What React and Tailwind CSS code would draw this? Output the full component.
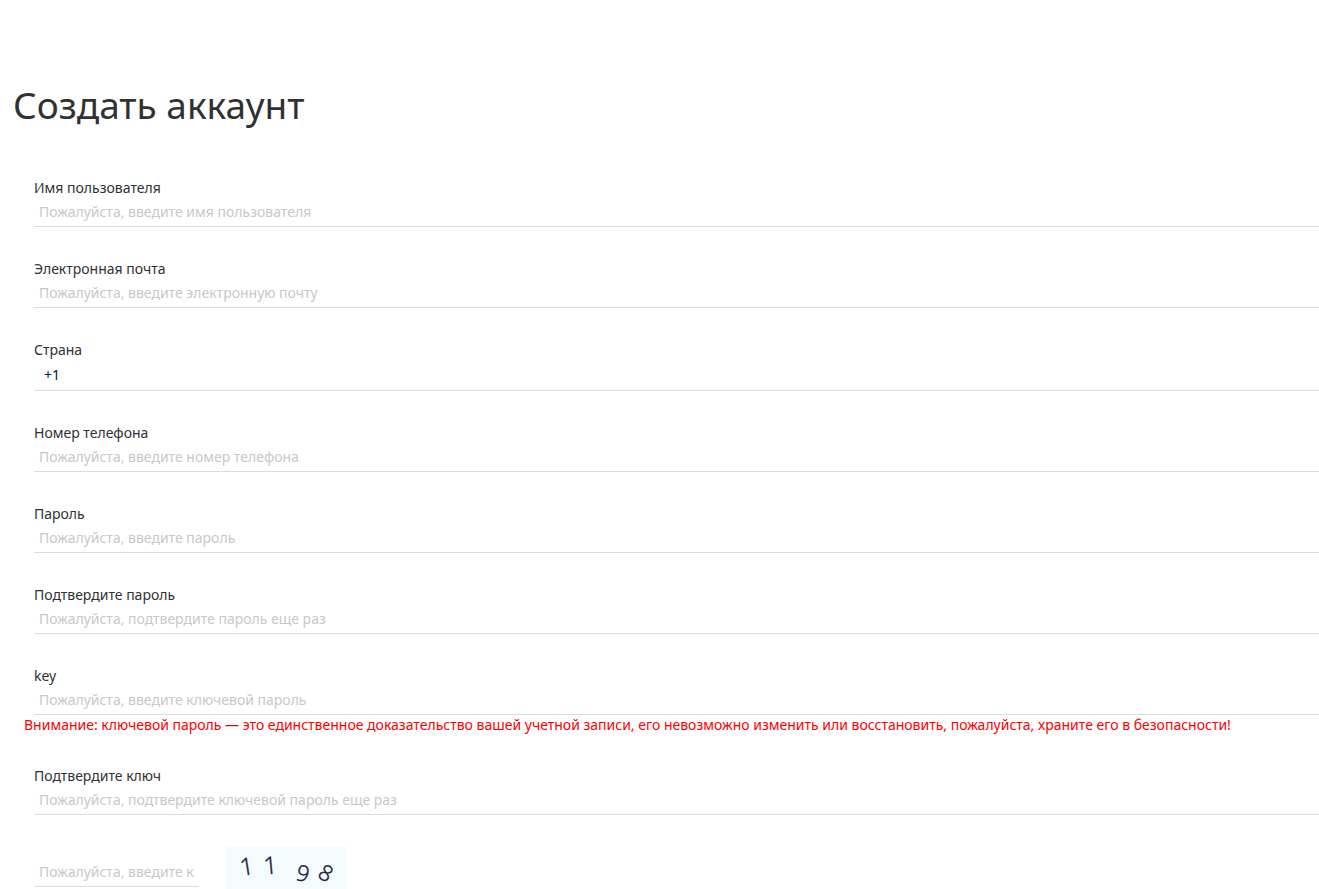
import React, { useState } from "react";

const FIELDS = [
  {
    name: "username",
    label: "Имя пользователя",
    placeholder: "Пожалуйста, введите имя пользователя",
  },
  {
    name: "email",
    label: "Электронная почта",
    placeholder: "Пожалуйста, введите электронную почту",
  },
  { name: "country", label: "Страна", options: ["+1", "+7", "+44", "+86"] },
  {
    name: "phone",
    label: "Номер телефона",
    placeholder: "Пожалуйста, введите номер телефона",
  },
  {
    name: "password",
    type: "password",
    label: "Пароль",
    placeholder: "Пожалуйста, введите пароль",
  },
  {
    name: "passwordConfirm",
    type: "password",
    label: "Подтвердите пароль",
    placeholder: "Пожалуйста, подтвердите пароль еще раз",
  },
  {
    name: "key",
    type: "password",
    label: "key",
    placeholder: "Пожалуйста, введите ключевой пароль",
    warning:
      "Внимание: ключевой пароль — это единственное доказательство вашей учетной записи, его невозможно изменить или восстановить, пожалуйста, храните его в безопасности!",
  },
  {
    name: "keyConfirm",
    type: "password",
    label: "Подтвердите ключ",
    placeholder: "Пожалуйста, подтвердите ключевой пароль еще раз",
  },
];

const Field = ({ field, value, onChange }) => (
  <div className="flex flex-col">
    <label htmlFor={field.name} className="ml-[34px] leading-5">
      {field.label}
    </label>
    {field.options ? (
      <select
        id={field.name}
        name={field.name}
        value={value}
        onChange={onChange}
        className="ml-[34px] h-[31px] appearance-none border-b border-[#dcdcdc] bg-white px-2.5 pb-0.5 text-[#001a4d] outline-none"
      >
        {field.options.map((option) => (
          <option key={option}>{option}</option>
        ))}
      </select>
    ) : (
      <input
        id={field.name}
        name={field.name}
        type={field.type || "text"}
        placeholder={field.placeholder}
        value={value}
        onChange={onChange}
        className="ml-[34px] h-[29px] border-b border-[#dcdcdc] px-[5px] pb-0.5 outline-none placeholder:text-[#c8c8c8]"
      />
    )}
    {field.warning && (
      <p className="ml-6 leading-[19px] text-[#ff0000]">{field.warning}</p>
    )}
  </div>
);

const Captcha = () => (
  <svg
    viewBox="0 0 120 42"
    className="h-[42px] w-[120px] bg-[#f3fbfe] font-['Open_Sans',sans-serif] text-[24px] font-light"
    fill="#1f1b3d"
    stroke="#1f1b3d"
    strokeWidth="0.5"
    textAnchor="middle"
  >
    <text transform="translate(22 28) rotate(-9)">1</text>
    <text transform="translate(45 27) rotate(-5)">1</text>
    <text transform="translate(75 34) rotate(14)" className="text-[22px]">9</text>
    <text transform="translate(96 33) rotate(30)" className="text-[22px]">8</text>
  </svg>
);

const App = () => {
  const [formData, setFormData] = useState({ country: "+1" });

  const handleChange = (event) => {
    const { name, value } = event.target;
    setFormData((prev) => ({ ...prev, [name]: value }));
  };

  return (
    <main className="bg-white pt-20 font-['Noto_Sans',sans-serif] text-[14px] text-[#303133]">
      <h1 className="ml-[13px] text-[37px] leading-[50px]">Создать аккаунт</h1>

      <form
        onSubmit={(event) => event.preventDefault()}
        className="mt-12 flex flex-col gap-8"
      >
        {FIELDS.map((field) => (
          <Field
            key={field.name}
            field={field}
            value={formData[field.name] || ""}
            onChange={handleChange}
          />
        ))}

        <div className="ml-[34px] flex gap-[27px]">
          <input
            name="captcha"
            type="text"
            aria-label="Код"
            placeholder="Пожалуйста, введите код"
            value={formData.captcha || ""}
            onChange={handleChange}
            className="mt-[11px] h-[29px] w-[165px] border-b border-[#dcdcdc] px-[5px] pb-0.5 outline-none placeholder:text-[#c8c8c8]"
          />
          <button type="button" aria-label="Обновить код">
            <Captcha />
          </button>
        </div>
      </form>
    </main>
  );
};

export default App;
